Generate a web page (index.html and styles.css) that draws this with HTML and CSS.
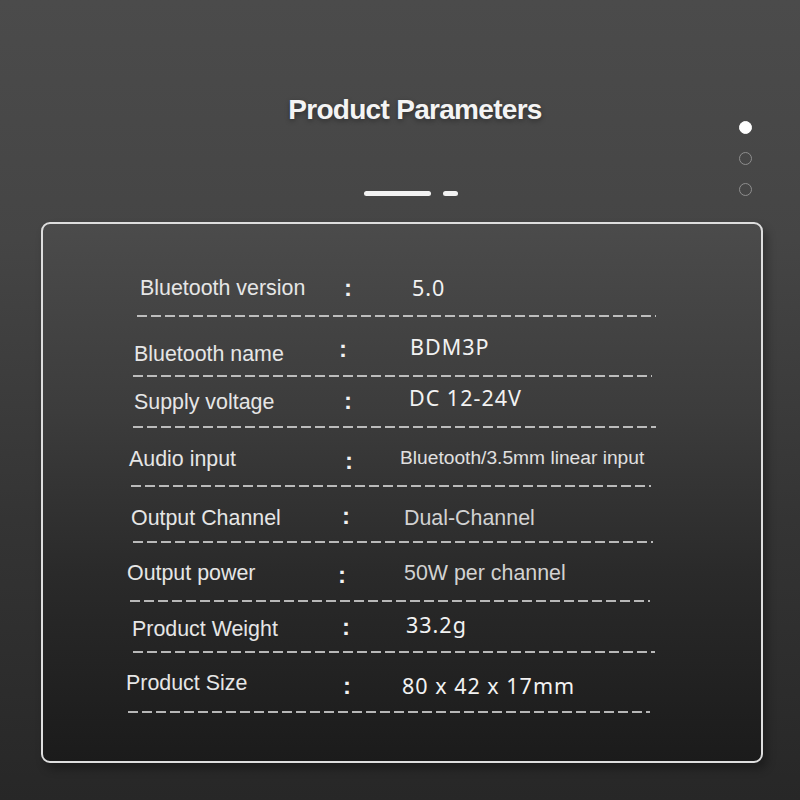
FILE: index.html
```html
<!DOCTYPE html>
<html lang="en">
<head>
<meta charset="utf-8">
<title>Product Parameters</title>
<link rel="stylesheet" href="styles.css">
</head>
<body>
<div class="page">
  <h1 class="title">Product Parameters</h1>
  <div class="indicator"><span class="pill long"></span><span class="pill short"></span></div>
  <div class="dots"><span class="dot on"></span><span class="dot"></span><span class="dot"></span></div>
  <div class="panel">
    <div class="list">
      <div class="item r1">
        <div class="row"><span class="label">Bluetooth version</span><span class="colon">:</span><span class="value num">5.0</span></div>
        <div class="dash"></div>
      </div>
      <div class="item r2">
        <div class="row"><span class="label">Bluetooth name</span><span class="colon">:</span><span class="value num">BDM3P</span></div>
        <div class="dash"></div>
      </div>
      <div class="item r3">
        <div class="row"><span class="label">Supply voltage</span><span class="colon">:</span><span class="value num">DC 12-24V</span></div>
        <div class="dash"></div>
      </div>
      <div class="item r4">
        <div class="row"><span class="label">Audio input</span><span class="colon">:</span><span class="value small">Bluetooth/3.5mm linear input</span></div>
        <div class="dash"></div>
      </div>
      <div class="item r5">
        <div class="row"><span class="label">Output Channel</span><span class="colon">:</span><span class="value gray">Dual-Channel</span></div>
        <div class="dash"></div>
      </div>
      <div class="item r6">
        <div class="row"><span class="label">Output power</span><span class="colon">:</span><span class="value gray">50W per channel</span></div>
        <div class="dash"></div>
      </div>
      <div class="item r7">
        <div class="row"><span class="label">Product Weight</span><span class="colon">:</span><span class="value num">33.2g</span></div>
        <div class="dash"></div>
      </div>
      <div class="item r8">
        <div class="row"><span class="label">Product Size</span><span class="colon">:</span><span class="value num">80 x 42 x 17mm</span></div>
        <div class="dash"></div>
      </div>
    </div>
  </div>
</div>
</body>
</html>
```
FILE: styles.css
```css
* { box-sizing: border-box; }
html, body { margin: 0; padding: 0; }
body {
  width: 800px;
  height: 800px;
  overflow: hidden;
  font-family: "Liberation Sans", Arial, sans-serif;
  background: linear-gradient(180deg, #4b4b4b 0%, #454545 30%, #343434 65%, #272727 100%);
}
.page {
  position: relative;
  width: 800px;
  height: 800px;
  padding-top: 94px;
}
.title {
  margin: 0;
  padding-left: 30px;
  text-align: center;
  font-size: 28px;
  line-height: 32px;
  font-weight: bold;
  letter-spacing: -0.7px;
  color: #f4f4f4;
  text-shadow: 0 2px 5px rgba(0,0,0,0.35);
}
.indicator {
  display: flex;
  justify-content: center;
  gap: 12px;
  padding-left: 22px;
  margin-top: 65px;
  height: 5px;
}
.pill { display: block; height: 5px; border-radius: 3px; background: #f2f2f2; }
.pill.long { width: 67px; }
.pill.short { width: 15px; }
.dots {
  position: absolute;
  left: 739px;
  top: 121px;
  display: flex;
  flex-direction: column;
  gap: 18px;
}
.dot {
  display: block;
  width: 13px;
  height: 13px;
  border-radius: 50%;
  border: 1.5px solid #8e8e8e;
}
.dot.on { background: #fff; border-color: #fff; }
.panel {
  margin-top: 26px;
  margin-left: 41px;
  width: 722px;
  height: 541px;
  border: 2px solid #dedede;
  border-radius: 9px;
  background: linear-gradient(180deg, #4b4b4b 0%, #3c3c3c 35%, #2a2a2a 65%, #1b1b1b 100%);
  box-shadow: 4px 6px 10px rgba(0,0,0,0.3);
}
.list { padding-top: 52px; }
.item { margin-top: var(--mt, 0); }
.row {
  display: flex;
  align-items: flex-start;
  height: 24px;
  line-height: 24px;
  white-space: nowrap;
}
.label {
  margin-left: var(--lx);
  width: calc(var(--cx) - var(--lx));
  margin-top: var(--ly, 0);
  font-size: 21.4px;
  color: #e6e6e6;
}
.colon {
  width: calc(var(--vx) - var(--cx));
  margin-top: var(--cy, 0);
  font-size: 24px;
  font-weight: bold;
  color: #f2f2f2;
}
.value { margin-top: var(--vy, 0); }
.value.num {
  font-family: "Noto Sans", "Open Sans", sans-serif;
  font-size: 21.5px;
  letter-spacing: 1px;
  color: #f2f2f2;
}
.value.gray { font-size: 21.4px; color: #d2d2d2; }
.value.small { font-size: 19.2px; color: #e0e0e0; }
.dash {
  margin-left: var(--dx);
  width: var(--dw);
  height: 2px;
  margin-top: var(--dg);
  background: repeating-linear-gradient(90deg, rgba(220,220,220,0.8) 0 10px, transparent 10px 14px);
}
.r1 { --mt: 0px;  --lx: 97px; --cx: 301px; --vx: 369px; --dx: 94px; --dw: 519px; --dg: 15px; }
.r2 { --mt: 21px; --lx: 91px; --cx: 296px; --vx: 367px; --dx: 90px; --dw: 519px; --dg: 13px; --ly: 4px; --cy: -1px; --vy: -3px; }
.r3 { --mt: 11px; --lx: 91px; --cx: 301px; --vx: 366px; --dx: 90px; --dw: 523px; --dg: 14px; --ly: 2px; --cy: 1px; --vy: -2px; }
.r4 { --mt: 19px; --lx: 86px; --cx: 302px; --vx: 357px; --dx: 88px; --dw: 520px; --dg: 14px; --cy: 2px; --vy: -1px; }
.r5 { --mt: 18px; --lx: 88px; --cx: 299px; --vx: 361px; --dx: 90px; --dw: 520px; --dg: 12px; --ly: 1px; --cy: -1px; --vy: 1px; }
.r6 { --mt: 19px; --lx: 84px; --cx: 295px; --vx: 361px; --dx: 87px; --dw: 520px; --dg: 14px; --ly: -1px; --cy: 1px; --vy: -1px; }
.r7 { --mt: 13px; --lx: 89px; --cx: 299px; --vx: 363px; --dx: 90px; --dw: 522px; --dg: 12px; --ly: 2px; --vy: -2px; }
.r8 { --mt: 20px; --lx: 83px; --cx: 300px; --vx: 359px; --dx: 85px; --dw: 522px; --dg: 14px; --ly: -2px; --cy: 1px; --vy: 1px; }
```
